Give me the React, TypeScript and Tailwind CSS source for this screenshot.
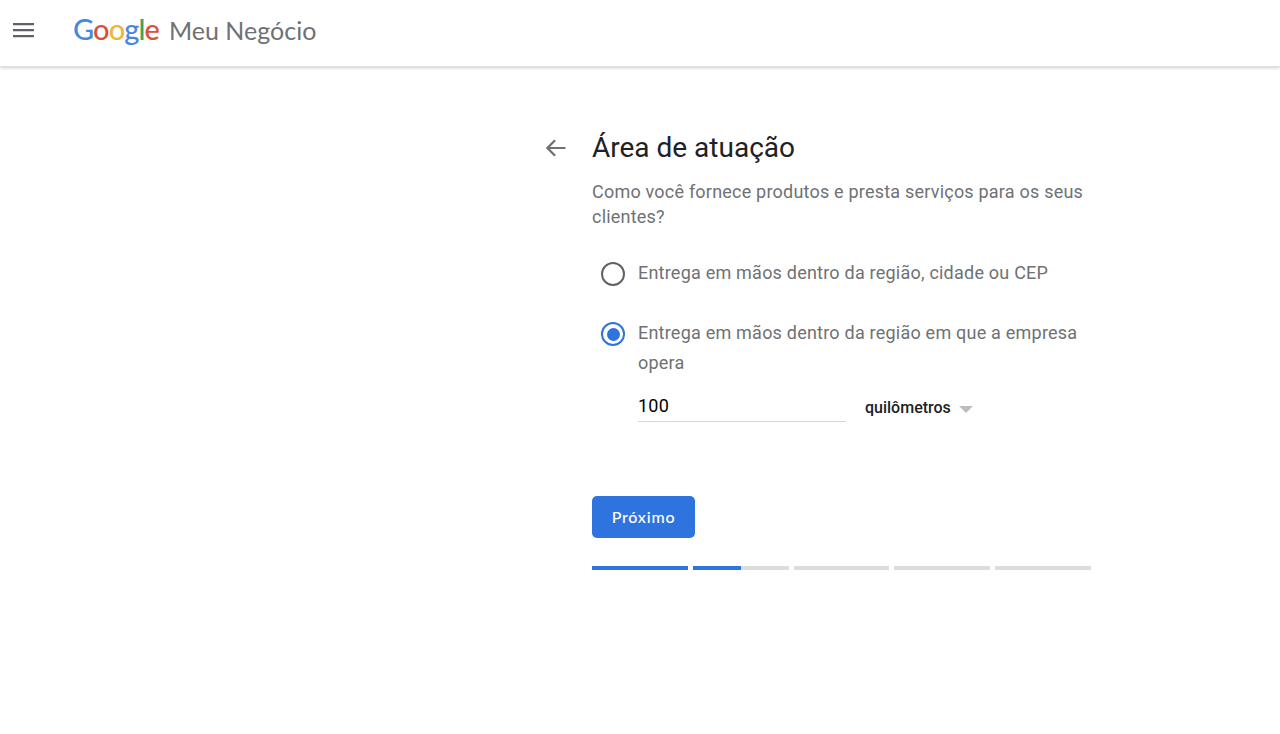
import React from "react";

const roboto = "font-['Roboto',sans-serif]";

function Radio({ checked }: { checked?: boolean }) {
  return (
    <span
      className={`mt-[4px] flex h-[24px] w-[24px] shrink-0 items-center justify-center rounded-full border-[2.5px] ${
        checked ? "border-[#2f73de]" : "border-[#5f6368]"
      }`}
    >
      {checked && <span className="h-[13px] w-[13px] rounded-full bg-[#2f73de]" />}
    </span>
  );
}

function Segment({ fill }: { fill: number }) {
  return (
    <div className="h-[4px] flex-1 bg-[#dcdcdc]">
      <div className="h-full bg-[#2f73de]" style={{ width: `${fill}%` }} />
    </div>
  );
}

export default function App() {
  return (
    <div className={`min-h-[734px] bg-white ${roboto}`}>
      <header className="flex h-[67px] items-center border-b border-[#e0e0e0] bg-white shadow-[0_1px_3px_rgba(60,64,67,0.25)]">
        <svg className="ml-[11px] mb-[6px] h-[24px] w-[24px]" viewBox="0 0 24 24" fill="#5f6368">
          <path d="M2 5h21v2.2H2zM2 11h21v2.2H2zM2 17h21v2.2H2z" />
        </svg>
        <div className="ml-[38px] mb-[9px] flex items-baseline font-['Lato',sans-serif]">
          <span className="text-[29px] font-medium leading-none tracking-[-0.9px]">
            <span className="text-[#4a86e0]">G</span>
            <span className="text-[#d9503f]">o</span>
            <span className="text-[#ecb63a]">o</span>
            <span className="text-[#4a86e0]">g</span>
            <span className="text-[#3fa45b]">l</span>
            <span className="text-[#d9503f]">e</span>
          </span>
          <span className="ml-[10px] text-[25px] leading-none text-[#6f7174]">Meu Negócio</span>
        </div>
      </header>

      <main className="flex pl-[543px] pt-[62px]">
        <svg className="mt-[7px] h-[24px] w-[24px]" viewBox="0 0 24 24" fill="#6f7174">
          <path d="M22.5 10.9H7l5.9-5.9-1.6-1.6L2.8 12l8.5 8.6 1.6-1.6L7 13.1h15.5z" />
        </svg>
        <div className="ml-[25px] w-[499px]">
          <h1 className="text-[28px] leading-[38px] text-[#202124]">Área de atuação</h1>
          <p className="mt-[12px] text-[18px] leading-[25px] tracking-[0.21px] text-[#6f7174]">
            Como você fornece produtos e presta serviços para os seus clientes?
          </p>

          <div className="mt-[29px] flex items-start pl-[9px]">
            <Radio />
            <span className="ml-[13px] text-[18px] leading-[30px] tracking-[0.22px] text-[#6f7174]">
              Entrega em mãos dentro da região, cidade ou CEP
            </span>
          </div>

          <div className="mt-[30px] flex items-start pl-[9px]">
            <Radio checked />
            <div className="ml-[13px] flex-1">
              <span className="block text-[18px] leading-[30px] tracking-[0.22px] text-[#6f7174]">
                Entrega em mãos dentro da região em que a empresa opera
              </span>
              <div className="mt-[8px] flex items-start">
                <div className="h-[36px] w-[208px] border-b border-[#d4d6d9] pt-[8px] text-[18px] leading-[24px] tracking-[0.2px] text-black">
                  100
                </div>
                <div className="ml-[19px] mt-[12px] flex items-center">
                  <span className="text-[16px] font-medium leading-[20px] text-[#202124]">quilômetros</span>
                  <span className="ml-[8px] mt-[2px] h-0 w-0 border-x-[7px] border-t-[7px] border-x-transparent border-t-[#bdbdbd]" />
                </div>
              </div>
            </div>
          </div>

          <button className="mt-[74px] block h-[42px] w-[103px] rounded-[5px] bg-[#2f73de] text-center font-['Lato',sans-serif] text-[16px] font-medium tracking-[0.8px] text-white">
            Próximo
          </button>

          <div className="mt-[28px] flex gap-[5px]">
            <Segment fill={100} />
            <Segment fill={50} />
            <Segment fill={0} />
            <Segment fill={0} />
            <Segment fill={0} />
          </div>
        </div>
      </main>
    </div>
  );
}
